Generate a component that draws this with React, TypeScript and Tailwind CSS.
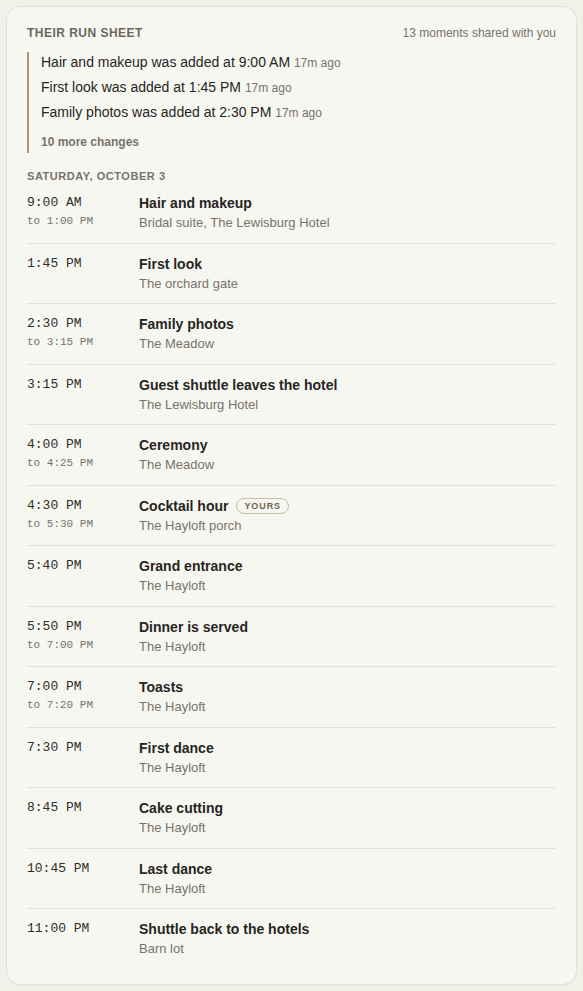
const changes = [
  { text: "Hair and makeup was added at 9:00 AM", ago: "17m ago" },
  { text: "First look was added at 1:45 PM", ago: "17m ago" },
  { text: "Family photos was added at 2:30 PM", ago: "17m ago" },
]

type Moment = { start: string; end?: string; title: string; place: string; yours?: boolean }

const moments: Moment[] = [
  { start: "9:00 AM", end: "1:00 PM", title: "Hair and makeup", place: "Bridal suite, The Lewisburg Hotel" },
  { start: "1:45 PM", title: "First look", place: "The orchard gate" },
  { start: "2:30 PM", end: "3:15 PM", title: "Family photos", place: "The Meadow" },
  { start: "3:15 PM", title: "Guest shuttle leaves the hotel", place: "The Lewisburg Hotel" },
  { start: "4:00 PM", end: "4:25 PM", title: "Ceremony", place: "The Meadow" },
  { start: "4:30 PM", end: "5:30 PM", title: "Cocktail hour", place: "The Hayloft porch", yours: true },
  { start: "5:40 PM", title: "Grand entrance", place: "The Hayloft" },
  { start: "5:50 PM", end: "7:00 PM", title: "Dinner is served", place: "The Hayloft" },
  { start: "7:00 PM", end: "7:20 PM", title: "Toasts", place: "The Hayloft" },
  { start: "7:30 PM", title: "First dance", place: "The Hayloft" },
  { start: "8:45 PM", title: "Cake cutting", place: "The Hayloft" },
  { start: "10:45 PM", title: "Last dance", place: "The Hayloft" },
  { start: "11:00 PM", title: "Shuttle back to the hotels", place: "Barn lot" },
]

export default function App() {
  return (
    <div className="min-h-screen bg-[#f1f1ea] p-[6px] font-['Liberation_Sans',Arial,sans-serif] text-[#27251f]">
      <div className="rounded-[14px] border border-[#e2e1d8] bg-[#f7f7f2] px-[20px] pt-[18px] pb-[15px] shadow-[0_1px_2px_rgba(0,0,0,0.04)]">
        <div className="flex items-center justify-between leading-4">
          <div className="text-[12px] font-bold tracking-[0.04em] text-[#6b675d]">THEIR RUN SHEET</div>
          <div className="text-[12px] text-[#77736a]">13 moments shared with you</div>
        </div>

        <div className="mt-[11px] border-l-2 border-[#a8976f] pl-[12px] pb-[3px]">
          <div className="flex flex-col gap-[5px]">
            {changes.map((c) => (
              <div key={c.text} className="text-[14px] leading-5">
                {c.text} <span className="text-[12px] leading-none text-[#77736a]">{c.ago}</span>
              </div>
            ))}
          </div>
          <div className="mt-[12px] text-[12px] font-bold leading-4 text-[#77736a]">10 more changes</div>
        </div>

        <div className="mt-[17px] text-[11px] font-bold leading-[13px] tracking-[0.05em] text-[#77736a]">
          SATURDAY, OCTOBER 3
        </div>

        <div>
          {moments.map((m, i) => (
            <div
              key={m.title}
              className={"flex py-[10px] " + (i < moments.length - 1 ? "border-b border-[#e4e3da]" : "")}
            >
              <div className="w-[112px] shrink-0 font-['Liberation_Mono',monospace]">
                <div className="text-[13px] leading-5 text-[#2f2d28]">{m.start}</div>
                {m.end && <div className="text-[11px] leading-4 text-[#77736a]">to {m.end}</div>}
              </div>
              <div>
                <div className="flex items-center gap-[8px] text-[14px] font-bold leading-5">
                  {m.title}
                  {m.yours && (
                    <span className="rounded-full border border-[#cbbf9c] px-[7px] text-[9px] font-bold leading-[14px] tracking-[0.1em] text-[#6b6350]">
                      YOURS
                    </span>
                  )}
                </div>
                <div className="text-[13px] leading-[19.5px] text-[#77736a]">{m.place}</div>
              </div>
            </div>
          ))}
        </div>
      </div>
    </div>
  )
}
